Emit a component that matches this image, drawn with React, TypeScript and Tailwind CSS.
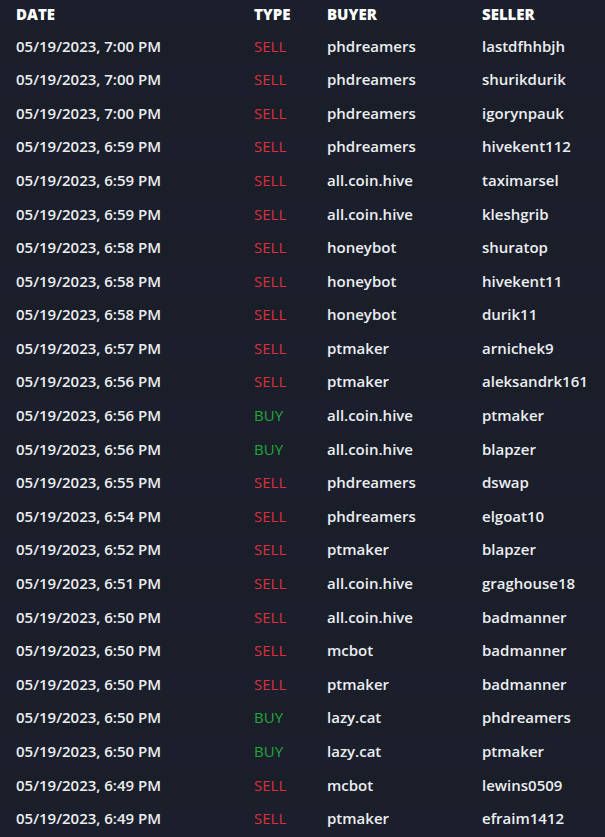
import React from "react";

type Row = [string, "SELL" | "BUY", string, string];

const rows: Row[] = [
  ["05/19/2023, 7:00 PM", "SELL", "phdreamers", "lastdfhhbjh"],
  ["05/19/2023, 7:00 PM", "SELL", "phdreamers", "shurikdurik"],
  ["05/19/2023, 7:00 PM", "SELL", "phdreamers", "igorynpauk"],
  ["05/19/2023, 6:59 PM", "SELL", "phdreamers", "hivekent112"],
  ["05/19/2023, 6:59 PM", "SELL", "all.coin.hive", "taximarsel"],
  ["05/19/2023, 6:59 PM", "SELL", "all.coin.hive", "kleshgrib"],
  ["05/19/2023, 6:58 PM", "SELL", "honeybot", "shuratop"],
  ["05/19/2023, 6:58 PM", "SELL", "honeybot", "hivekent11"],
  ["05/19/2023, 6:58 PM", "SELL", "honeybot", "durik11"],
  ["05/19/2023, 6:57 PM", "SELL", "ptmaker", "arnichek9"],
  ["05/19/2023, 6:56 PM", "SELL", "ptmaker", "aleksandrk161"],
  ["05/19/2023, 6:56 PM", "BUY", "all.coin.hive", "ptmaker"],
  ["05/19/2023, 6:56 PM", "BUY", "all.coin.hive", "blapzer"],
  ["05/19/2023, 6:55 PM", "SELL", "phdreamers", "dswap"],
  ["05/19/2023, 6:54 PM", "SELL", "phdreamers", "elgoat10"],
  ["05/19/2023, 6:52 PM", "SELL", "ptmaker", "blapzer"],
  ["05/19/2023, 6:51 PM", "SELL", "all.coin.hive", "graghouse18"],
  ["05/19/2023, 6:50 PM", "SELL", "all.coin.hive", "badmanner"],
  ["05/19/2023, 6:50 PM", "SELL", "mcbot", "badmanner"],
  ["05/19/2023, 6:50 PM", "SELL", "ptmaker", "badmanner"],
  ["05/19/2023, 6:50 PM", "BUY", "lazy.cat", "phdreamers"],
  ["05/19/2023, 6:50 PM", "BUY", "lazy.cat", "ptmaker"],
  ["05/19/2023, 6:49 PM", "SELL", "mcbot", "lewins0509"],
  ["05/19/2023, 6:49 PM", "SELL", "ptmaker", "efraim1412"],
];

export default function App() {
  return (
    <div
      className="w-[605px] h-[837px] overflow-hidden bg-[#1b1f2b] text-[#eceef2]"
      style={{ fontFamily: '"Open Sans", "Liberation Sans", sans-serif' }}
    >
      <div className="grid grid-cols-[238px_73px_155px_1fr] h-[29px] items-center pl-4 text-[15px] font-extrabold text-white">
        <div>DATE</div>
        <div>TYPE</div>
        <div>BUYER</div>
        <div>SELLER</div>
      </div>
      {rows.map((r, i) => (
        <div
          key={i}
          className={`grid grid-cols-[238px_73px_155px_1fr] h-[33.6px] items-center pl-4 text-[15px] font-semibold ${
            i % 2 === 0 ? "bg-[#1a1e29]" : "bg-[#1b1f2b]"
          }`}
        >
          <div>{r[0]}</div>
          <div className={`font-medium ${r[1] === "SELL" ? "text-[#dc2f3c]" : "text-[#22a53b]"}`}>{r[1]}</div>
          <div>{r[2]}</div>
          <div>{r[3]}</div>
        </div>
      ))}
    </div>
  );
}
